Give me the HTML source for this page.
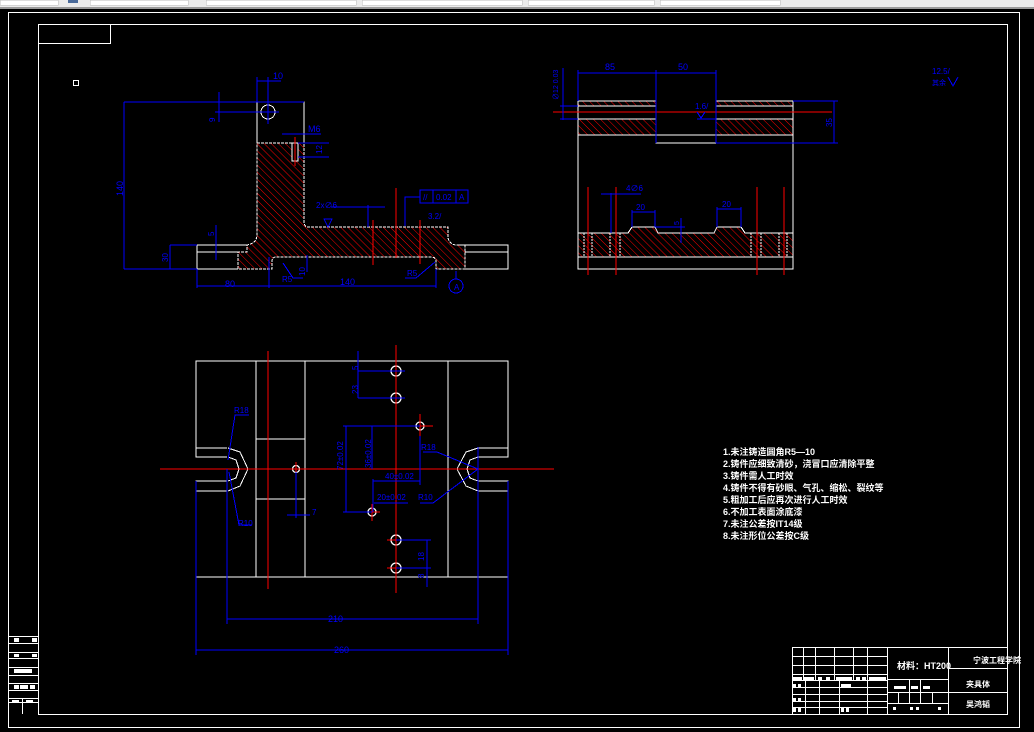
<!DOCTYPE html>
<html><head><meta charset="utf-8"><style>
html,body{margin:0;padding:0;background:#000;width:1034px;height:732px;overflow:hidden}
svg{display:block}
text{font-family:"Liberation Sans","Noto Sans CJK SC",sans-serif}
</style></head><body>
<svg width="1034" height="732" viewBox="0 0 1034 732" xmlns="http://www.w3.org/2000/svg" shape-rendering="crispEdges">
<defs>
<pattern id="h" width="5" height="5" patternUnits="userSpaceOnUse" patternTransform="rotate(-45)">
<line x1="0" y1="0" x2="0" y2="5" stroke="#f00" stroke-width="1.4"/>
</pattern>
</defs>
<rect width="1034" height="732" fill="#000"/>
<!-- toolbar -->
<rect x="0" y="0" width="1034" height="7" fill="#ececec"/>
<rect x="0" y="7" width="1034" height="2" fill="#9a9a9a"/>
<g fill="#fff" stroke="#bbb" stroke-width="0.5">
<rect x="0" y="0" width="58" height="5"/><rect x="90" y="0" width="98" height="5"/>
<rect x="206" y="0" width="150" height="5"/><rect x="362" y="0" width="160" height="5"/>
<rect x="528" y="0" width="126" height="5"/><rect x="660" y="0" width="120" height="5"/>
</g>
<rect x="68" y="0" width="10" height="3" fill="#4a6a9a"/>
<!-- borders -->
<g fill="none" stroke="#fff" stroke-width="1">
<rect x="8.5" y="12.5" width="1011" height="715"/>
<rect x="38.5" y="24.5" width="969" height="690"/>
<rect x="38.5" y="24.5" width="72" height="19"/>
<rect x="73.5" y="80.5" width="5" height="5"/>
</g>

<!-- FRONT VIEW -->
<path d="M257,143 L304,143 L304,222 Q304,227 309,227 L448,227 L448,238 Q450,245 457,245 L465,245 L465,269 L436,269 L436,260 Q435,257 431,257 L276,257 Q272,257 272,261 L272,269 L238,269 L238,252 L247,252 L247,245 Q257,243 257,235 Z" fill="url(#h)" stroke="#fff" stroke-dasharray="3,1"/>
<g fill="none" stroke="#fff">
<path d="M257,143 V102 H304 V143"/>
<circle cx="268" cy="112" r="7"/>
<path d="M197,245 H247 M197,252 H238 M197,245 V269 H238"/>
<path d="M457,245 H508 V269 H465 M465,252 H508"/>
<rect x="292" y="143" width="6" height="18" fill="#000"/>
</g>
<g stroke="#f00"><line x1="373" y1="220" x2="373" y2="265"/><line x1="396" y1="188" x2="396" y2="258"/><line x1="420" y1="220" x2="420" y2="264"/><line x1="295" y1="137" x2="295" y2="166"/></g>
<g stroke="#00f" fill="none">
<line x1="124" y1="102" x2="304" y2="102"/><line x1="124" y1="102" x2="124" y2="269"/><line x1="124" y1="269" x2="197" y2="269"/>
<line x1="170" y1="245" x2="197" y2="245"/><line x1="170" y1="245" x2="170" y2="269"/>
<line x1="197" y1="269" x2="197" y2="288"/><line x1="269" y1="257" x2="269" y2="288"/><line x1="436" y1="269" x2="436" y2="288"/>
<line x1="197" y1="286" x2="436" y2="286"/>
<line x1="257" y1="77" x2="257" y2="102"/><line x1="268" y1="77" x2="268" y2="124"/><line x1="257" y1="81" x2="281" y2="81"/>
<line x1="215" y1="112" x2="279" y2="112"/><line x1="219" y1="92" x2="219" y2="122"/>
<line x1="282" y1="134" x2="321" y2="134"/><line x1="298" y1="143" x2="329" y2="143"/><line x1="298" y1="157" x2="329" y2="157"/>
<line x1="331" y1="207" x2="385" y2="207"/><line x1="368" y1="205" x2="368" y2="227"/>
<rect x="420" y="190" width="48" height="13"/><line x1="433" y1="190" x2="433" y2="203"/><line x1="456" y1="190" x2="456" y2="203"/>
<path d="M420,197 H405 V226"/>
<line x1="216" y1="225" x2="216" y2="260"/><line x1="307" y1="255" x2="307" y2="272"/>
<path d="M283,263 L293,278 H303"/><path d="M435,262 L416,278 H405"/>
<circle cx="456" cy="286" r="7"/><line x1="456" y1="271" x2="456" y2="279"/>
<path d="M324,219 L328,227 L332,219 Z"/>
</g>
<g fill="#00f" font-size="9">
<text x="273" y="79">10</text><text x="308" y="132">M6</text>
<text x="225" y="287">80</text><text x="340" y="285">140</text>
<text x="316" y="208" font-size="8">2x∅6</text>
<text x="436" y="200" font-size="8">0.02</text><text x="423" y="200" font-size="8">//</text><text x="459" y="200" font-size="8">A</text>
<text x="428" y="219" font-size="8">3.2/</text>
<text x="454" y="290" font-size="8">A</text>
<text x="282" y="282" font-size="8">R5</text><text x="407" y="276" font-size="8">R5</text>
<text transform="translate(123,196) rotate(-90)" font-size="9">140</text>
<text transform="translate(168,262) rotate(-90)" font-size="8">30</text>
<text transform="translate(322,154) rotate(-90)" font-size="8">12</text>
<text transform="translate(215,122) rotate(-90)" font-size="8">9</text>
<text transform="translate(214,236) rotate(-90)" font-size="8">5</text>
<text transform="translate(305,276) rotate(-90)" font-size="8">10</text>
</g>

<!-- SECTION VIEW -->
<g fill="url(#h)" stroke="none">
<rect x="578" y="101" width="78" height="5"/><rect x="578" y="119" width="78" height="16"/>
<rect x="716" y="101" width="77" height="5"/><rect x="716" y="119" width="77" height="16"/>
<path d="M578,233 H628 L632,227 H655 L658,233 H714 L717,227 H741 L745,233 H793 V257 H578 Z"/>
</g>
<g fill="none" stroke="#fff">
<path d="M578,101 H656 M578,106 H656 M578,119 H656 M578,135 H656 M716,101 H793 M716,106 H793 M716,119 H793 M716,135 H793"/>
<path d="M656,101 V143 H716 V101 M656,135 H716"/>
<path d="M578,101 V269 H793 V101"/>
<path d="M578,233 H628 L632,227 H655 L658,233 H714 L717,227 H741 L745,233 H793 M578,257 H793"/>
<path d="M584,233 V257 M592,233 V257 M610,233 V257 M620,233 V257 M751,233 V257 M761,233 V257 M779,233 V257 M787,233 V257" stroke-dasharray="2,1"/>
</g>
<g stroke="#f00"><line x1="553" y1="112" x2="832" y2="112"/>
<line x1="588" y1="187" x2="588" y2="275"/><line x1="616" y1="187" x2="616" y2="275"/><line x1="757" y1="187" x2="757" y2="275"/><line x1="784" y1="187" x2="784" y2="275"/></g>
<g stroke="#00f" fill="none">
<line x1="578" y1="70" x2="578" y2="101"/><line x1="656" y1="70" x2="656" y2="143"/><line x1="716" y1="70" x2="716" y2="143"/>
<line x1="578" y1="73" x2="716" y2="73"/>
<line x1="563" y1="68" x2="563" y2="120"/><line x1="560" y1="106" x2="578" y2="106"/><line x1="560" y1="119" x2="578" y2="119"/>
<line x1="793" y1="101" x2="838" y2="101"/><line x1="716" y1="143" x2="838" y2="143"/><line x1="834" y1="101" x2="834" y2="143"/>
<line x1="697" y1="119" x2="716" y2="119"/><path d="M697,112 L701,118 L705,112"/>
<line x1="601" y1="194" x2="641" y2="194"/><line x1="611" y1="193" x2="611" y2="233"/>
<line x1="632" y1="212" x2="655" y2="212"/><line x1="632" y1="210" x2="632" y2="227"/><line x1="655" y1="210" x2="655" y2="227"/>
<line x1="717" y1="209" x2="741" y2="209"/><line x1="717" y1="207" x2="717" y2="227"/><line x1="741" y1="207" x2="741" y2="227"/>
<line x1="655" y1="227" x2="685" y2="227"/><line x1="681" y1="218" x2="681" y2="243"/>
</g>
<g fill="#00f" font-size="9">
<text x="605" y="70">85</text><text x="678" y="70">50</text>
<text x="695" y="109" font-size="8">1.6/</text>
<text x="626" y="191" font-size="8">4∅6</text>
<text x="636" y="210" font-size="8">20</text><text x="722" y="207" font-size="8">20</text>
<text transform="translate(558,100) rotate(-90)" font-size="7">∅12 0.03</text>
<text transform="translate(832,127) rotate(-90)" font-size="8">35</text>
<text transform="translate(679,225) rotate(-90)" font-size="7">5</text>
<text x="932" y="74" font-size="8">12.5/</text><text x="932" y="85" font-size="7">其余</text>
<path d="M948,77 L953,86 L958,77" fill="none" stroke="#00f"/>
</g>

<!-- PLAN VIEW -->
<g fill="none" stroke="#fff">
<path d="M227,448 H196 V361 H508 V448 H478"/>
<path d="M227,457 H196 V448 M478,457 H508 V448"/>
<path d="M227,481 H196 V577 H508 V481 H478 M227,491 H196 M478,491 H508"/>
<path d="M256,361 V577 M305,361 V577 M448,361 V577 M256,439 H305 M256,499 H305"/>
<path d="M228,448 L240,452 L248,469 L240,486 L228,491 M228,457 L236,460 L239,469 L236,478 L228,481"/>
<path d="M478,448 L466,452 L457,469 L466,486 L478,491 M478,457 L470,460 L467,469 L470,478 L478,481"/>
<g stroke-width="1.3" shape-rendering="auto"><circle cx="396" cy="371" r="5"/><circle cx="396" cy="398" r="5"/><circle cx="420" cy="426" r="4"/><circle cx="296" cy="469" r="3.5"/><circle cx="372" cy="512" r="4"/><circle cx="396" cy="540" r="5"/><circle cx="396" cy="568" r="5"/></g>
</g>
<g stroke="#f00">
<line x1="160" y1="469" x2="554" y2="469"/>
<line x1="268" y1="351" x2="268" y2="589"/><line x1="396" y1="345" x2="396" y2="593"/>
<line x1="388" y1="371" x2="404" y2="371"/><line x1="388" y1="398" x2="404" y2="398"/>
<line x1="410" y1="426" x2="433" y2="426"/><line x1="420" y1="414" x2="420" y2="438"/>
<line x1="365" y1="512" x2="380" y2="512"/><line x1="372" y1="504" x2="372" y2="521"/>
<line x1="387" y1="540" x2="405" y2="540"/><line x1="387" y1="568" x2="405" y2="568"/>
<line x1="296" y1="462" x2="296" y2="476"/>
</g>
<g stroke="#00f" fill="none">
<line x1="358" y1="351" x2="358" y2="398"/><line x1="358" y1="371" x2="405" y2="371"/><line x1="358" y1="398" x2="405" y2="398"/>
<line x1="343" y1="426" x2="420" y2="426"/><line x1="346" y1="426" x2="346" y2="512"/><line x1="343" y1="512" x2="372" y2="512"/>
<line x1="372" y1="426" x2="372" y2="469"/><line x1="373" y1="481" x2="420" y2="481"/><line x1="420" y1="436" x2="420" y2="485"/>
<line x1="373" y1="479" x2="373" y2="512"/><line x1="374" y1="503" x2="408" y2="503"/>
<line x1="396" y1="540" x2="431" y2="540"/><line x1="396" y1="568" x2="431" y2="568"/><line x1="427" y1="540" x2="427" y2="587"/>
<line x1="296" y1="472" x2="296" y2="518"/><line x1="287" y1="515" x2="310" y2="515"/>
<line x1="227" y1="469" x2="227" y2="624"/><line x1="478" y1="447" x2="478" y2="624"/><line x1="227" y1="619" x2="478" y2="619"/>
<line x1="196" y1="481" x2="196" y2="655"/><line x1="508" y1="481" x2="508" y2="655"/><line x1="196" y1="650" x2="508" y2="650"/>
<path d="M249,415 H235 L228,460"/><path d="M229,472 L239,525 H252"/>
<path d="M423,452 H437 L478,469"/><path d="M478,469 L433,503 H420"/>
</g>
<g fill="#00f" font-size="8">
<text x="234" y="413">R18</text><text x="238" y="526">R10</text>
<text x="421" y="450">R18</text><text x="418" y="500">R10</text>
<text x="385" y="479">40±0.02</text><text x="377" y="500">20±0.02</text>
<text x="312" y="515">7</text>
<text x="328" y="622" font-size="9">210</text><text x="334" y="653" font-size="9">260</text>
<text transform="translate(343,470) rotate(-90)">72±0.02</text>
<text transform="translate(371,468) rotate(-90)">36±0.02</text>
<text transform="translate(358,394) rotate(-90)">23</text>
<text transform="translate(358,370) rotate(-90)">5</text>
<text transform="translate(424,561) rotate(-90)">18</text>
<text transform="translate(424,578) rotate(-90)">8</text>
</g>

<!-- NOTES -->
<g fill="#fff" font-size="9" font-weight="bold">
<text x="723" y="455">1.未注铸造圆角R5—10</text>
<text x="723" y="467">2.铸件应细致清砂，浇冒口应清除平整</text>
<text x="723" y="479">3.铸件需人工时效</text>
<text x="723" y="491">4.铸件不得有砂眼、气孔、缩松、裂纹等</text>
<text x="723" y="503">5.粗加工后应再次进行人工时效</text>
<text x="723" y="515">6.不加工表面涂底漆</text>
<text x="723" y="527">7.未注公差按IT14级</text>
<text x="723" y="539">8.未注形位公差按C级</text>
</g>

<!-- TITLE BLOCK -->
<g fill="none" stroke="#fff">
<rect x="792.5" y="647.5" width="215" height="67"/>
<path d="M887.5,647 V714 M948.5,647 V714 M948,668.5 H1008 M948,692.5 H1008"/>
<path d="M792,656.5 H887 M792,665.5 H887 M792,674.5 H887 M792,680.5 H887 M792,687.5 H887 M792,694.5 H887 M792,701.5 H887 M792,707.5 H887"/>
<path d="M803.5,647 V680 M815.5,647 V680 M834.5,647 V680 M853.5,647 V680 M867.5,647 V714"/>
<path d="M805.5,680 V714 M819.5,680 V714 M839.5,680 V714"/>
<path d="M887,679.5 H948 M887,692.5 H948 M887,703.5 H948 M909.5,679 V703 M920.5,679 V703 M932.5,692 V703 M898.5,692 V703"/>
</g>
<g fill="#fff">
<rect x="793" y="677" width="9" height="3"/><rect x="804" y="677" width="10" height="3"/><rect x="818" y="677" width="4" height="3"/><rect x="826" y="677" width="4" height="3"/><rect x="836" y="677" width="16" height="3"/><rect x="856" y="677" width="4" height="3"/><rect x="862" y="677" width="4" height="3"/><rect x="869" y="677" width="17" height="3"/>
<rect x="793" y="684" width="3" height="3"/><rect x="798" y="684" width="3" height="3"/><rect x="841" y="684" width="10" height="3"/>
<rect x="793" y="698" width="3" height="3"/><rect x="798" y="698" width="3" height="3"/>
<rect x="793" y="708" width="3" height="4"/><rect x="798" y="708" width="3" height="4"/><rect x="841" y="708" width="3" height="4"/><rect x="846" y="708" width="3" height="4"/>
<rect x="894" y="686" width="12" height="3"/><rect x="911" y="686" width="7" height="3"/><rect x="923" y="686" width="7" height="3"/>
<rect x="893" y="707" width="3" height="3"/><rect x="910" y="707" width="3" height="3"/><rect x="916" y="707" width="3" height="3"/><rect x="938" y="707" width="3" height="3"/>
</g>
<g fill="#fff" font-size="9" font-weight="bold">
<text x="897" y="669">材料：HT200</text>
<text x="973" y="663" font-size="8">宁波工程学院</text>
<text x="966" y="687" font-size="8">夹具体</text>
<text x="966" y="707" font-size="8">吴鸿韬</text>
</g>

<!-- left-bottom table -->
<g fill="none" stroke="#fff">
<path d="M8,636.5 H38 M8,643.5 H38 M8,652.5 H38 M8,658.5 H38 M8,667.5 H38 M8,675.5 H38 M8,683.5 H38 M8,690.5 H38 M8,698.5 H38 M8,702.5 H38 M22.5,698 V714"/>
</g>
<g fill="#fff">
<rect x="14" y="638" width="5" height="4"/><rect x="32" y="638" width="5" height="4"/>
<rect x="14" y="654" width="5" height="3"/><rect x="32" y="654" width="5" height="3"/>
<rect x="14" y="669" width="18" height="4"/>
<rect x="14" y="685" width="5" height="4"/><rect x="20" y="685" width="8" height="4"/><rect x="30" y="685" width="5" height="4"/>
<rect x="12" y="700" width="7" height="3"/><rect x="26" y="700" width="7" height="3"/>
</g>
</svg>
</body></html>
